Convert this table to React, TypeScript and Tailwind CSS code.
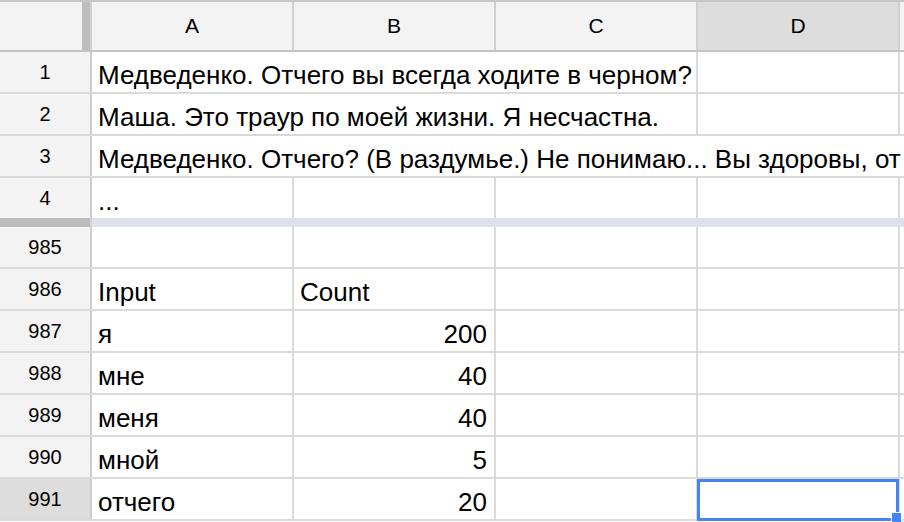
import React from "react";

const font = { fontFamily: '"Liberation Sans", Arial, sans-serif' };

function RowHeader({ n, selected }: { n: string; selected?: boolean }) {
  return (
    <div
      className={`w-[92px] shrink-0 border-r-2 border-[#cdcdcd] flex items-center justify-center text-[20px] text-black ${
        selected ? "bg-[#dddddd]" : "bg-[#f3f3f3]"
      }`}
    >
      {n}
    </div>
  );
}

function Cell({ text, right }: { text?: string; right?: boolean }) {
  return (
    <div
      className={`w-[202px] shrink-0 border-r-2 border-[#dadada] flex items-center pl-[6px] pr-[7px] pt-[5px] text-[26px] leading-[30px] text-black whitespace-nowrap ${
        right ? "justify-end" : "justify-start"
      }`}
    >
      {text}
    </div>
  );
}

function Row({
  n,
  cells,
  selected,
  noBorder,
}: {
  n: string;
  cells: React.ReactNode;
  selected?: boolean;
  noBorder?: boolean;
}) {
  return (
    <div
      className={`flex shrink-0 ${noBorder ? "h-[40px]" : "h-[42px] border-b-2 border-[#dadada]"}`}
    >
      <RowHeader n={n} selected={selected} />
      {cells}
    </div>
  );
}

function Span({ text }: { text: string }) {
  return (
    <div className="w-[606px] shrink-0 border-r-2 border-[#dadada] flex items-center pl-[6px] pr-[7px] pt-[5px] text-[26px] leading-[30px] text-black whitespace-nowrap">
      {text}
    </div>
  );
}

export default function App() {
  const data = [
    ["985", "", ""],
    ["986", "Input", "Count"],
    ["987", "я", "200"],
    ["988", "мне", "40"],
    ["989", "меня", "40"],
    ["990", "мной", "5"],
  ];
  return (
    <div
      className="w-[904px] h-[522px] overflow-hidden bg-white flex flex-col"
      style={font}
    >
      {/* column header */}
      <div className="flex h-[52px] shrink-0 border-t-[2px] border-b-2 border-t-[#c6c6c6] border-b-[#c4c4c4] bg-[#f3f3f3]">
        <div className="w-[82px] shrink-0" />
        <div className="w-[8px] shrink-0 bg-[#bdbdbd]" />
        <div className="w-[2px] shrink-0 bg-[#d0d0d0]" />
        {["A", "B", "C"].map((c) => (
          <div
            key={c}
            className="w-[202px] shrink-0 border-r-2 border-[#d0d0d0] flex items-center justify-center text-[21px] text-black"
          >
            {c}
          </div>
        ))}
        <div className="w-[202px] shrink-0 border-r-2 border-[#d0d0d0] bg-[#dddddd] flex items-center justify-center text-[21px] text-black">
          D
        </div>
        <div className="w-[202px] shrink-0" />
      </div>

      <Row
        n="1"
        cells={
          <>
            <Span text="Медведенко. Отчего вы всегда ходите в черном?" />
            <Cell />
          </>
        }
      />
      <Row
        n="2"
        cells={
          <>
            <Span text="Маша. Это траур по моей жизни. Я несчастна." />
            <Cell />
          </>
        }
      />
      <Row
        n="3"
        cells={
          <div className="flex-1 flex items-center pl-[6px] pt-[5px] text-[26px] leading-[30px] text-black whitespace-nowrap overflow-hidden">
            Медведенко. Отчего? (В раздумье.) Не понимаю... Вы здоровы, от
          </div>
        }
      />
      <Row
        n="4"
        noBorder
        cells={
          <>
            <Cell text="..." />
            <Cell />
            <Cell />
            <Cell />
          </>
        }
      />
      {/* frozen separator */}
      <div className="flex h-[9px] shrink-0">
        <div className="w-[90px] shrink-0 bg-[#bcbcbc]" />
        <div className="w-[2px] shrink-0 bg-[#cfd3da]" />
        <div className="flex-1 bg-[#dde1e9]" />
      </div>

      {data.map(([n, a, b]) => (
        <Row
          key={n}
          n={n}
          cells={
            <>
              <Cell text={a} />
              <Cell text={b} right={n !== "986"} />
              <Cell />
              <Cell />
            </>
          }
        />
      ))}

      <Row
        n="991"
        selected
        cells={
          <>
            <Cell text="отчего" />
            <Cell text="20" right />
            <Cell />
            <div className="relative w-[202px] shrink-0 border-r-2 border-[#dadada]">
              <div className="absolute left-[-1px] top-0 w-[202px] h-[42px] border-[3px] border-[#4285f4]" />
              <div className="absolute left-[193px] top-[33px] w-[11px] h-[11px] bg-[#4285f4] border border-white" />
            </div>
          </>
        }
      />
    </div>
  );
}
